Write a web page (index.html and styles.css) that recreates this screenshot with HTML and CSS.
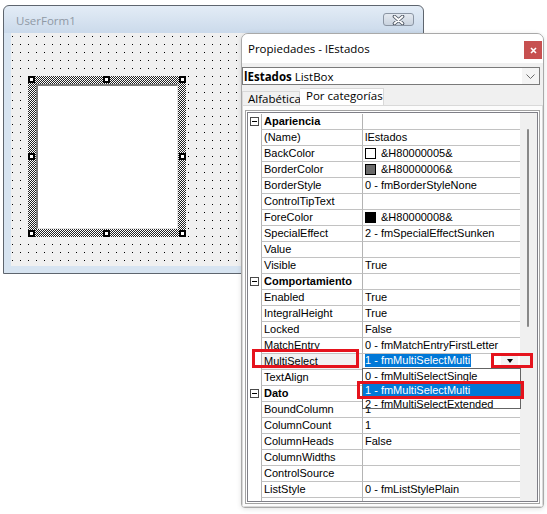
FILE: index.html
```html
<!DOCTYPE html>
<html lang="es">
<head>
<meta charset="utf-8">
<title>UserForm1 - Propiedades</title>
<link rel="stylesheet" href="styles.css">
</head>
<body>
<div class="desk">
  <div class="form">
    <div class="form-title">
      <span class="form-name">UserForm1</span>
      <span class="form-close"><svg width="13" height="10" viewBox="0 0 13 10"><path d="M2.5 1.5 L10.5 8.5 M10.5 1.5 L2.5 8.5" stroke="#4b5461" stroke-width="3.6" stroke-linecap="round" fill="none"/><path d="M2.5 1.5 L10.5 8.5 M10.5 1.5 L2.5 8.5" stroke="#fff" stroke-width="1.8" stroke-linecap="round" fill="none"/></svg></span>
    </div>
    <div class="form-client">
      <div class="lb">
        <div class="lb-face"></div>
        <i class="hd h-tl"></i><i class="hd h-tm"></i><i class="hd h-tr"></i>
        <i class="hd h-ml"></i><i class="hd h-mr"></i>
        <i class="hd h-bl"></i><i class="hd h-bm"></i><i class="hd h-br"></i>
      </div>
    </div>
  </div>

  <div class="props">
    <div class="ptitle">
      <span>Propiedades - lEstados</span>
      <span class="pclose"><svg width="7" height="7" viewBox="0 0 7 7"><path d="M1 1 L6 6 M6 1 L1 6" stroke="#fff" stroke-width="1.6" fill="none"/></svg></span>
    </div>
    <div class="combo">
      <span class="combo-text"><b>lEstados</b> ListBox</span>
      <span class="chev"><svg width="9" height="5" viewBox="0 0 9 5"><path d="M0.5 0.5 L4.5 4.5 L8.5 0.5" stroke="#6a6a6a" stroke-width="1" fill="none"/></svg></span>
    </div>
    <div class="tabs">
      <div class="tab">Alfabética</div>
      <div class="tab active">Por categorías</div>
    </div>
    <div class="page">
      <div class="gframe">
        <div class="ginner">
          <div class="rows">
            <div class="row cat"><span class="m"><i class="minus"></i></span><span class="n">Apariencia</span><span class="v"></span></div>
            <div class="row"><span class="m"></span><span class="n">(Name)</span><span class="v">lEstados</span></div>
            <div class="row"><span class="m"></span><span class="n">BackColor</span><span class="v"><i class="sw sw-w"></i>&amp;H80000005&amp;</span></div>
            <div class="row"><span class="m"></span><span class="n">BorderColor</span><span class="v"><i class="sw sw-g"></i>&amp;H80000006&amp;</span></div>
            <div class="row"><span class="m"></span><span class="n">BorderStyle</span><span class="v">0 - fmBorderStyleNone</span></div>
            <div class="row"><span class="m"></span><span class="n">ControlTipText</span><span class="v"></span></div>
            <div class="row"><span class="m"></span><span class="n">ForeColor</span><span class="v"><i class="sw sw-b"></i>&amp;H80000008&amp;</span></div>
            <div class="row"><span class="m"></span><span class="n">SpecialEffect</span><span class="v">2 - fmSpecialEffectSunken</span></div>
            <div class="row"><span class="m"></span><span class="n">Value</span><span class="v"></span></div>
            <div class="row"><span class="m"></span><span class="n">Visible</span><span class="v">True</span></div>
            <div class="row cat"><span class="m"><i class="minus"></i></span><span class="n">Comportamiento</span><span class="v"></span></div>
            <div class="row"><span class="m"></span><span class="n">Enabled</span><span class="v">True</span></div>
            <div class="row"><span class="m"></span><span class="n">IntegralHeight</span><span class="v">True</span></div>
            <div class="row"><span class="m"></span><span class="n">Locked</span><span class="v">False</span></div>
            <div class="row"><span class="m"></span><span class="n">MatchEntry</span><span class="v">0 - fmMatchEntryFirstLetter</span></div>
            <div class="row cur"><span class="m"></span><span class="n">MultiSelect</span><span class="v"><span class="hl">1 - fmMultiSelectMulti</span><span class="ddbtn"><i class="tri"></i></span></span></div>
            <div class="row"><span class="m"></span><span class="n">TextAlign</span><span class="v">1 - fmTextAlignLeft</span></div>
            <div class="row cat"><span class="m"><i class="minus"></i></span><span class="n">Dato</span><span class="v"></span></div>
            <div class="row"><span class="m"></span><span class="n">BoundColumn</span><span class="v">1</span></div>
            <div class="row"><span class="m"></span><span class="n">ColumnCount</span><span class="v">1</span></div>
            <div class="row"><span class="m"></span><span class="n">ColumnHeads</span><span class="v">False</span></div>
            <div class="row"><span class="m"></span><span class="n">ColumnWidths</span><span class="v"></span></div>
            <div class="row"><span class="m"></span><span class="n">ControlSource</span><span class="v"></span></div>
            <div class="row"><span class="m"></span><span class="n">ListStyle</span><span class="v">0 - fmListStylePlain</span></div>
            <div class="row"><span class="m"></span><span class="n">RowSource</span><span class="v"></span></div>
          </div>
          <div class="vscroll"><div class="thumb"></div></div>
        </div>
      </div>
    </div>
  </div>

  <div class="droplist">
    <div class="opt">0 - fmMultiSelectSingle</div>
    <div class="opt on">1 - fmMultiSelectMulti</div>
    <div class="opt">2 - fmMultiSelectExtended</div>
  </div>

  <div class="mark mark-name"></div>
  <div class="mark mark-btn"></div>
  <div class="mark mark-opt"></div>
</div>
</body>
</html>
```

FILE: styles.css
```css
* { box-sizing: border-box; }
html, body { margin: 0; padding: 0; }
body {
  width: 547px;
  height: 514px;
  overflow: hidden;
  background: #fff;
  font-family: "Liberation Sans", Arial, sans-serif;
}
.desk { position: relative; width: 547px; height: 514px; }

/* ---------- UserForm window ---------- */
.form {
  position: absolute;
  left: 3px;
  top: 5px;
  width: 421px;
  height: 269px;
  border: 1px solid #5e656e;
  border-radius: 6px 6px 0 0;
  background: linear-gradient(#e3ecf6 0, #cbdaeb 27px, #d7e4f1 27px);
  display: flex;
  flex-direction: column;
  padding: 0 7px 7px;
}
.form-title {
  height: 27px;
  display: flex;
  align-items: center;
  justify-content: space-between;
  padding: 0 2px 0 5px;
}
.form-name {
  font-family: "Open Sans", "Noto Sans", sans-serif;
  font-size: 11.5px;
  color: #8f99a5;
  margin-top: 1px;
}
.form-close {
  width: 31px;
  height: 13px;
  border: 1px solid #8b95a3;
  border-radius: 3px;
  background: linear-gradient(#e4e9f0, #c9d3df);
  display: flex;
  align-items: center;
  justify-content: center;
}
.form-close svg { display: block; }
.form-client {
  flex: 1;
  position: relative;
  overflow: hidden;
  background-color: #f0f0f0;
  background-image: conic-gradient(from 270deg at 1px 1px, #000 90deg, transparent 0);
  background-size: 8px 8px;
  background-position: 1px 3px;
}

/* ListBox selected on the design canvas */
.lb {
  position: absolute;
  left: 17px;
  top: 43px;
  width: 158px;
  height: 161px;
  padding: 8px;
  background: repeating-conic-gradient(#222 0 25%, #fff 0 50%) 0 0 / 2px 2px;
}
.lb-face {
  width: 100%;
  height: 100%;
  background: #fff;
  border-top: 2px solid #7c7c7c;
  border-left: 2px solid #7c7c7c;
  border-right: 1px solid #e3e3e3;
  border-bottom: 1px solid #e3e3e3;
}
.hd {
  position: absolute;
  width: 7px;
  height: 7px;
  background: #fff;
  border: 2px solid #000;
}
.h-tl { left: 0; top: 0; }
.h-tm { left: 75px; top: 0; }
.h-tr { left: 151px; top: 0; }
.h-ml { left: 0; top: 77px; }
.h-mr { left: 151px; top: 77px; }
.h-bl { left: 0; top: 154px; }
.h-bm { left: 75px; top: 154px; }
.h-br { left: 151px; top: 154px; }

/* ---------- Properties window ---------- */
.props {
  position: absolute;
  left: 241px;
  top: 33px;
  width: 303px;
  height: 475px;
  border: 1px solid #a9a9a9;
  border-radius: 7px 7px 4px 4px;
  background: #f0f0f0;
  display: flex;
  flex-direction: column;
  overflow: hidden;
  box-shadow: 0 1px 5px rgba(0, 0, 0, 0.12);
}
.ptitle {
  height: 29px;
  flex: none;
  background: #fff;
  display: flex;
  align-items: center;
  justify-content: space-between;
  padding: 0 1px 0 6px;
  font-family: "Open Sans", "Noto Sans", sans-serif;
  font-size: 11.5px;
  color: #000;
}
.pclose {
  width: 18px;
  height: 18px;
  margin-top: 3px;
  background: #c75050;
  display: flex;
  align-items: center;
  justify-content: center;
}
.pclose svg { display: block; }

.combo {
  flex: none;
  height: 18px;
  margin: 4px 3px 0 0;
  border: 1px solid #7a7a7a;
  background: #fff;
  display: flex;
  align-items: center;
  font-family: "Open Sans", "Noto Sans", sans-serif;
  font-size: 11.5px;
}
.combo-text { flex: 1; padding-left: 1px; white-space: nowrap; }
.combo-text b { font-weight: 700; }
.chev {
  width: 17px;
  height: 16px;
  background: #f4f4f4;
  display: flex;
  align-items: center;
  justify-content: center;
}
.chev svg { display: block; }

.tabs {
  flex: none;
  height: 17px;
  margin-top: 3px;
  display: flex;
  align-items: flex-end;
  font-family: "Open Sans", "Noto Sans", sans-serif;
  font-size: 11.5px;
}
.tab {
  width: 58px;
  height: 14px;
  padding-left: 5px;
  line-height: 14px;
  border: 1px solid #d9d9d9;
  border-bottom: none;
  background: #f0f0f0;
  white-space: nowrap;
}
.tab.active {
  width: 84px;
  height: 17px;
  padding-left: 6px;
  line-height: 14px;
  background: #fff;
  border-left: none;
}

.page {
  flex: 1;
  min-height: 0;
  border: 1px solid #d9d9d9;
  background: #fcfcfc;
  padding: 4px 2px 2px 2px;
  display: flex;
}
.gframe {
  flex: 1;
  min-height: 0;
  border: 1px solid #a3a3a3;
  padding: 1px;
  background: #fff;
  display: flex;
}
.ginner {
  flex: 1;
  min-height: 0;
  border: 1px solid #7f7f87;
  display: flex;
  overflow: hidden;
  font-size: 11px;
  color: #000;
}
.rows { flex: 1; padding-top: 1px; overflow: hidden; }
.row {
  display: grid;
  grid-template-columns: 13px 101px 1fr;
  height: 16px;
}
.row .n,
.row .v {
  border-left: 1px solid #b4b4b4;
  border-bottom: 1px solid #c2c2c2;
  padding-left: 2px;
  line-height: 15px;
  white-space: nowrap;
  overflow: hidden;
  display: flex;
  align-items: center;
}
.cat .n { font-weight: 700; }
.cur .n { background: #f2f2f2; }
.minus {
  display: block;
  position: relative;
  width: 9px;
  height: 9px;
  margin: 3px 0 0 2px;
  border: 1px solid #4a4a4a;
  background: #fff;
}
.minus::after {
  content: "";
  position: absolute;
  left: 1px;
  top: 3px;
  width: 5px;
  height: 1px;
  background: #000;
}
.sw {
  display: block;
  flex: none;
  width: 11px;
  height: 11px;
  border: 1px solid #000;
  margin-right: 5px;
}
.sw-w { background: #fff; }
.sw-g { background: #6b6b6b; }
.sw-b { background: #000; }

.hl {
  align-self: flex-start;
  background: #0078d7;
  color: #fff;
  line-height: 13px;
  height: 13px;
  padding-right: 1px;
}
.ddbtn {
  margin-left: auto;
  margin-right: 2px;
  align-self: flex-start;
  margin-top: 1px;
  width: 17px;
  height: 12px;
  background: #f3f3f3;
  display: flex;
  align-items: center;
  justify-content: center;
}
.tri {
  display: block;
  width: 0;
  height: 0;
  border-left: 3px solid transparent;
  border-right: 3px solid transparent;
  border-top: 4px solid #000;
}

.vscroll {
  flex: none;
  width: 17px;
  background: #f0f0f0;
  padding-top: 16px;
}
.thumb {
  width: 2px;
  height: 198px;
  margin-left: 7px;
  background: #888;
  border-radius: 1px;
}

/* ---------- Overlays ---------- */
.droplist {
  position: absolute;
  left: 362px;
  top: 368px;
  width: 159px;
  height: 41px;
  border: 1px solid #646464;
  background: #fff;
  overflow: hidden;
  font-size: 11px;
}
.opt {
  height: 14px;
  line-height: 14px;
  padding-left: 2px;
  white-space: nowrap;
}
.opt.on { background: #0078d7; color: #fff; }

.mark {
  position: absolute;
  border: 3px solid #e5131d;
}
.mark-name { left: 252px; top: 349px; width: 107px; height: 19px; }
.mark-btn { left: 491px; top: 353px; width: 42px; height: 15px; }
.mark-opt { left: 357px; top: 381px; width: 167px; height: 18px; }
```
